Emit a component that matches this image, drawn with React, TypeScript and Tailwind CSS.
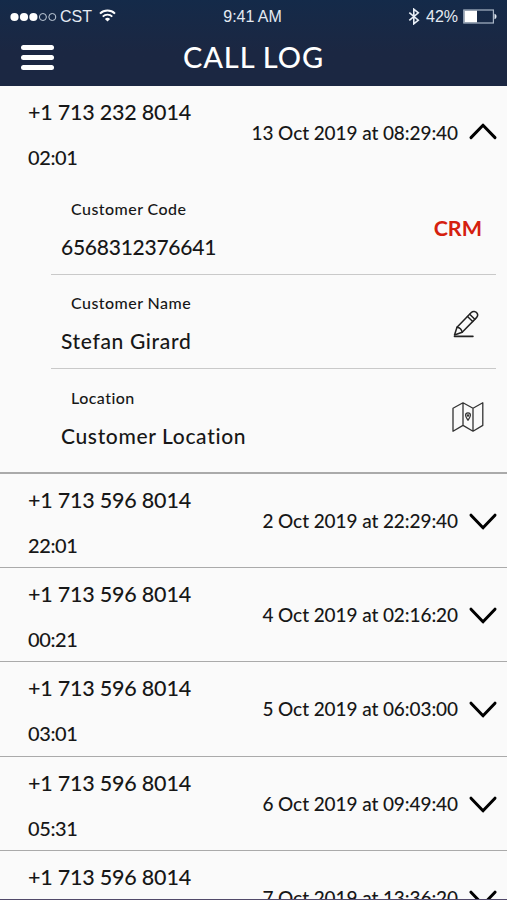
import type { ReactNode } from "react";

type Call = {
  phone: string;
  duration: string;
  date: string;
};

const calls: Call[] = [
  { phone: "+1 713 596 8014", duration: "22:01", date: "2 Oct 2019 at 22:29:40" },
  { phone: "+1 713 596 8014", duration: "00:21", date: "4 Oct 2019 at 02:16:20" },
  { phone: "+1 713 596 8014", duration: "03:01", date: "5 Oct 2019 at 06:03:00" },
  { phone: "+1 713 596 8014", duration: "05:31", date: "6 Oct 2019 at 09:49:40" },
  { phone: "+1 713 596 8014", duration: "", date: "7 Oct 2019 at 13:36:20" },
];

function StatusBar() {
  return (
    <div className="flex h-[33px] items-center justify-between pr-[10px] pl-[10px] font-['Liberation_Sans',sans-serif] text-[16px] text-[#e4ebf3]">
      <div className="flex flex-1 items-center">
        <svg className="shrink-0" fill="none" height="10" viewBox="0 0 48 10" width="48">
          <circle cx="4.5" cy="5" fill="#fff" r="4.1" />
          <circle cx="14" cy="5" fill="#fff" r="4.1" />
          <circle cx="23.4" cy="5" fill="#fff" r="4.1" />
          <circle cx="32.9" cy="5" r="3.5" stroke="#c3cedb" />
          <circle cx="42.3" cy="5" r="3.5" stroke="#c3cedb" />
        </svg>
        <span className="ml-[2px]">CST</span>
        <svg className="ml-[7px] mb-[2px]" fill="none" height="13" viewBox="0 0 17 13" width="17">
          <path d="M1 4.6a10.8 10.8 0 0 1 15 0" stroke="#fff" strokeWidth="1.9" />
          <path d="M3.7 7.6a6.9 6.9 0 0 1 9.6 0" stroke="#fff" strokeWidth="1.8" />
          <path d="M8.5 12.6 5.9 9.9a3.8 3.8 0 0 1 5.2 0z" fill="#fff" />
        </svg>
      </div>
      <span className="mr-[2px] tracking-[-0.05px]">9:41 AM</span>
      <div className="flex flex-1 items-center justify-end">
        <svg fill="none" height="17" viewBox="0 0 12 17" width="12">
          <path
            d="m1.3 4.6 9 7.6-4.5 3.6V1.2l4.5 3.6-9 7.6"
            stroke="#e8eef5"
            strokeWidth="1.6"
          />
        </svg>
        <span className="ml-[6px]">42%</span>
        <svg className="ml-[5px]" fill="none" height="15" viewBox="0 0 34 15" width="34">
          <rect height="13" stroke="#a9b6c6" strokeWidth="1.2" width="29.6" x=".8" y="1" />
          <rect fill="#fff" height="11.6" width="12.5" x="1.5" y="1.7" />
          <path d="M31.5 4.8c2.7.8 2.7 4.6 0 5.4z" fill="#e4ebf3" />
        </svg>
      </div>
    </div>
  );
}

function Header() {
  return (
    <header className="h-[86px] shrink-0 bg-linear-to-b from-[#142a49] to-[#1b2742] to-60%">
      <StatusBar />
      <div className="grid h-[48px] grid-cols-[1fr_auto_1fr] items-center">
        <div className="ml-[21px] flex w-[33px] flex-col gap-[5px]">
          <span className="h-[5px] rounded-full bg-white" />
          <span className="h-[5px] rounded-full bg-white" />
          <span className="h-[5px] rounded-full bg-white" />
        </div>
        <h1 className="mb-[2px] text-[29px] text-white leading-none tracking-[0.9px]">CALL LOG</h1>
      </div>
    </header>
  );
}

function Chevron({ open = false }: { open?: boolean }) {
  return (
    <svg
      className="ml-[10px]"
      fill="none"
      height="20"
      stroke="#000"
      strokeLinecap="round"
      strokeLinejoin="round"
      strokeWidth="3"
      viewBox="0 0 30 20"
      width="30"
    >
      <path d={open ? "M3 14.6 15 2.2 27 14.6" : "M3 4.2 15 16.8 27 4.2"} />
    </svg>
  );
}

function CallSummary({ call, open }: { call: Call; open?: boolean }) {
  return (
    <div className="flex h-[94.4px] shrink-0 items-center justify-between pr-[9px] pl-[28px]">
      <div className="flex flex-col pt-[4px]">
        <span className="h-[45px] text-[21.5px] leading-[45px] tracking-[-0.2px]">{call.phone}</span>
        <span className="h-[45px] text-[20px] leading-[45px] tracking-[-0.4px]">{call.duration}</span>
      </div>
      <div className="flex items-center">
        <span className="text-[19px] leading-6 tracking-[-0.08px]">{call.date}</span>
        <Chevron open={open} />
      </div>
    </div>
  );
}

function Detail({
  label,
  value,
  valueClassName = "tracking-[0.65px]",
  action,
}: {
  label: string;
  value: string;
  valueClassName?: string;
  action: ReactNode;
}) {
  return (
    <div className="flex h-[94.4px] items-center justify-between pl-[10px]">
      <div className="flex flex-col pt-px">
        <span className="ml-[10px] text-base leading-[38px] tracking-[0.45px]">{label}</span>
        <span className={`text-[21px] leading-[38px] ${valueClassName}`}>{value}</span>
      </div>
      {action}
    </div>
  );
}

function PencilIcon() {
  return (
    <svg
      className="mt-[6px] mr-[16px]"
      fill="none"
      height="28"
      stroke="#222"
      strokeLinecap="round"
      strokeLinejoin="round"
      strokeWidth="1.5"
      viewBox="0 0 28 28"
      width="28"
    >
      <path d="M2.5 25 5 17.2 19.3 2.5c1.8-1.8 4.2-1 5.2.1s1.7 3.3 0 5L10.2 22.2 2.5 25" />
      <path d="M5 17.2c2.8.4 4.6 2.1 5.2 5M15.5 6.5l5.2 5M17.7 4.3l5.1 5" />
      <path d="M2.5 26.3h18.4" strokeWidth="1.7" />
    </svg>
  );
}

function MapIcon() {
  return (
    <svg
      className="mt-[2px] mr-[12px]"
      fill="none"
      height="32"
      stroke="#333"
      strokeLinejoin="round"
      strokeWidth="1.3"
      viewBox="0 0 32 32"
      width="32"
    >
      <path d="m1 7.2 10-5.4 10 5.4 9.8-5.4v22.6L21 30.2l-10-5.8-10 5.8zM11 1.8v22.6M21 7.2v23" />
      <path d="M16 19.2c-1.4-2-2.4-3.3-2.4-4.9a2.4 2.5 0 0 1 4.8 0c0 1.6-1 2.9-2.4 4.9z" />
      <circle cx="16" cy="14.4" r=".6" />
    </svg>
  );
}

export default function App() {
  return (
    <div className="flex h-[900px] w-[507px] flex-col overflow-hidden border-[#51496a] border-b bg-[#fafafa] font-medium font-['Lato',sans-serif] text-[#171717]">
      <Header />
      <main className="flex flex-col">
        <section className="flex h-[387.5px] shrink-0 flex-col border-[#aaa] border-b-2">
          <CallSummary
            call={{ phone: "+1 713 232 8014", duration: "02:01", date: "13 Oct 2019 at 08:29:40" }}
            open
          />
          <div className="mr-[11px] ml-[51px] divide-y divide-[#c9c9c9]">
            <Detail
              action={
                <span className="mt-[3px] mr-[14px] font-bold text-[#d5200f] text-[21.5px] leading-none">
                  CRM
                </span>
              }
              label="Customer Code"
              value="6568312376641"
              valueClassName="tracking-[-0.25px]"
            />
            <Detail action={<PencilIcon />} label="Customer Name" value="Stefan Girard" />
            <Detail action={<MapIcon />} label="Location" value="Customer Location" />
          </div>
        </section>
        {calls.map((call) => (
          <section className="shrink-0 border-[#aaa] border-b" key={call.date}>
            <div className="-mb-px">
              <CallSummary call={call} />
            </div>
          </section>
        ))}
      </main>
    </div>
  );
}
